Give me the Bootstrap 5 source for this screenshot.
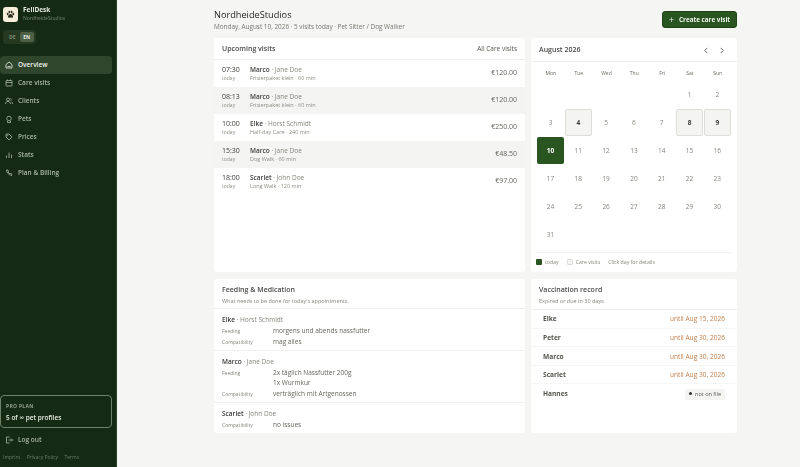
<!DOCTYPE html>
<html lang="en">
<head>
    <meta charset="UTF-8">
    <meta name="viewport" content="width=device-width, initial-scale=1.0">
    <title>FellDesk</title>
    <link rel="stylesheet" href="https://cdn.jsdelivr.net/npm/bootstrap@5.3.0/dist/css/bootstrap.min.css">
    <style>
        html, body { height: 467px; overflow: hidden; }
        body { font-family: "Open Sans", "Liberation Sans", sans-serif; background: #f5f5f3; color: #2b2b2b; font-size: 7px; }
        .shell { height: 467px; }
        .side { width: 117px; flex: none; background: #142a12; border-right: 1px solid #2a3f28; color: #c9d3c5; padding: 6px 4px 0 0; }
        .side > * { transform: translateZ(0); }
        .brand { padding: 0 0 0 3px; height: 16px; gap: 5px; }
        .paw { width: 15px; height: 15px; background: #f6eeda; border-radius: 3px; }
        .brand-name { font-size: 6.5px; font-weight: 700; color: #e6ebe2; line-height: 8px; }
        .brand-sub { font-size: 5px; color: #75856f; line-height: 8px; }
        .lang { margin: 8px 0 0 3px; width: 33px; height: 14px; background: #24391f; border-radius: 3px; padding: 2px; }
        .lang span { flex: 1; text-align: center; font-size: 5px; font-weight: 700; line-height: 10px; color: #7d8c77; border-radius: 2px; }
        .lang .on { background: #4d6147; color: #e6ebe2; }
        .menu { margin-top: 12px; }
        .menu a { height: 18px; display: flex; align-items: center; gap: 5px; padding-left: 5px; color: #a9b7a4; font-size: 6.5px; font-weight: 600; text-decoration: none; border-radius: 4px; }
        .menu a.on { background: #2f452c; color: #eef2ea; }
        .menu svg, .logout svg { width: 8px; height: 8px; flex: none; fill: none; stroke: currentColor; stroke-width: 1.6; }
        .plan { margin-top: auto; border: 1px solid #6d8169; border-radius: 4px; height: 33px; padding: 6px 5px; }
        .plan-top { font-size: 5px; font-weight: 700; letter-spacing: .3px; color: #93a28d; line-height: 8px; }
        .plan-txt { font-size: 6.5px; font-weight: 600; color: #e6ebe2; line-height: 10px; margin-top: 3px; }
        .logout { margin-top: 6px; height: 12px; padding-left: 5px; gap: 5px; color: #a9b7a4; font-size: 6.5px; font-weight: 600; }
        .legal { margin-top: 6px; height: 12px; margin-bottom: 3px; padding-left: 3px; gap: 6.5px; color: #6c7c66; font-size: 5px; }
        .main-col { width: 523px; margin-left: 97px; padding-top: 9px; transform: translateZ(0); }
        .page-top { height: 29px; }
        .page-title { font-size: 9.2px; font-weight: 500; line-height: 12px; margin: 0; color: #262626; }
        .page-sub { font-size: 6.4px; color: #77776f; line-height: 10px; margin-top: 1px; }
        .add-btn { background: #295521; color: #f2f5ee; border: 1px solid #1e4418; border-radius: 3px; font-size: 6.3px; font-weight: 700; height: 17px; width: 75px; padding: 0; margin-top: 2px; line-height: 14px; }
        .add-btn span { font-weight: 400; font-size: 9px; margin-right: 5px; vertical-align: -1px; }
        .board { display: grid; grid-template-columns: 311px 206px; grid-template-rows: 234px 154px; gap: 7px 6px; }
        .box { background: #fff; border-radius: 3px; border: 0; overflow: hidden; }
        .box-head { padding: 1.5px 8px 0; height: 24px; border-bottom: 1px solid #eeeeeb; font-size: 7px; font-weight: 600; color: #4a4a48; }
        .box-head.short { height: 22px; }
        .box-head-link { font-size: 6.5px; font-weight: 400; color: #55554f; }
        .box-head2 { height: 30px; border-bottom: 1px solid #eeeeeb; padding: 6px 8px 0; }
        .box-head2.tall { height: 31px; }
        .box-title { font-size: 7px; font-weight: 600; color: #4a4a48; line-height: 10px; }
        .box-note { font-size: 5.5px; color: #85857e; line-height: 8px; margin-top: 2px; }
        .visit { height: 27px; padding: 0 8px; }
        .visit.alt { background: #f4f4f2; }
        .v-time { width: 28px; flex: none; }
        .v-hour { font-size: 7px; color: #3a3a38; line-height: 9px; }
        .v-day { font-size: 5px; color: #8d8d86; line-height: 8px; }
        .v-name { font-size: 6.5px; line-height: 9px; color: #85857e; }
        .v-name b, .feed-name b { color: #3a3a38; font-weight: 600; }
        .v-kind { font-size: 5.5px; line-height: 8px; color: #8d8d86; }
        .v-price { margin-left: auto; font-size: 7px; color: #66665f; }
        .cal-grid { display: grid; grid-template-columns: repeat(7, 27.8px); padding: 4px 6px 0; }
        .cal-dow { height: 15px; display: flex; align-items: center; justify-content: center; font-size: 5px; color: #66665f; }
        .cal-day { height: 27px; margin-bottom: 1px; width: 27px; display: flex; align-items: center; justify-content: center; font-size: 6.5px; color: #85857e; border-radius: 2px; }
        .cal-day.has { background: #f4f4f2; border: 1px solid #deded9; color: #3a3a38; font-weight: 700; }
        .cal-day.now { background: #295521; color: #fff; font-weight: 700; }
        .chev { gap: 10px; margin-right: 4px; color: #55554f; }
        .chev svg { width: 6px; height: 7px; fill: none; stroke: currentColor; stroke-width: 1; }
        .cal-foot { margin: 3px 5px 0; border-top: 1px solid #f1f1ee; padding-top: 6px; gap: 8px; font-size: 5.2px; color: #85857e; }
        .swatch { width: 6px; height: 6px; display: inline-block; border-radius: 1px; margin-right: 3px; vertical-align: -1px; }
        .swatch.dark { background: #295521; }
        .swatch.pale { background: #f4f4f2; border: 1px solid #deded9; }
        .feed { padding: 5.5px 8px 1.500px; border-bottom: 1px solid #f1f1ee; }
        .feed:last-child { border-bottom: 0; }
        .feed-name { font-size: 6.5px; line-height: 9px; color: #85857e; margin-bottom: 2px; }
        .feed-row { display: flex; font-size: 6.5px; color: #66665f; line-height: 10px; margin-bottom: 1.5px; }
        .feed-label { width: 51px; flex: none; font-size: 5px; color: #85857e; }
        .vac { height: 18.6px; padding: 1px 12px 0; border-bottom: 1px solid #f6f6f4; }
        .vac:last-child { border-bottom: 0; }
        .vac-name { font-size: 6.6px; font-weight: 700; color: #55554f; }
        .vac-date { margin-left: auto; font-size: 6.6px; color: #c17f4e; }
        .vac-tag { margin-left: auto; background: #f4f4f2; border-radius: 2px; padding: 1px 4px; font-size: 5.5px; line-height: 9px; color: #55554f; }
        .vac-tag i { display: inline-block; width: 3px; height: 3px; background: #333; border-radius: 50%; margin-right: 3px; vertical-align: 1px; }
    </style>
</head>
<body>
<div class="shell d-flex">
    <!-- sidebar -->
    <aside class="side d-flex flex-column">
        <div class="brand d-flex align-items-center">
            <div class="paw d-flex align-items-center justify-content-center">
                <svg width="9" height="9" viewBox="0 0 16 16" fill="#2a2a1c"><ellipse cx="3" cy="7" rx="1.6" ry="2.2"/><ellipse cx="6" cy="3.5" rx="1.6" ry="2.3"/><ellipse cx="10" cy="3.5" rx="1.6" ry="2.3"/><ellipse cx="13" cy="7" rx="1.6" ry="2.2"/><path d="M8 7c-2.5 0-4.5 3-4.5 5 0 1.6 1.5 2 2.5 1.7.8-.3 1.3-.4 2-.4s1.200.1 2 .4c1 .3 2.500-.1 2.500-1.700 0-2-2-5-4.500-5z"/></svg>
            </div>
            <div>
                <div class="brand-name">FellDesk</div>
                <div class="brand-sub">NordheideStudios</div>
            </div>
        </div>
        <div class="lang d-flex"><span>DE</span><span class="on">EN</span></div>
        <nav class="menu">
            <a href="#" class="on"><svg viewBox="0 0 16 16"><path d="M2 7l6-5 6 5v7H2z"/><path d="M5 11h6"/></svg>Overview</a>
            <a href="#"><svg viewBox="0 0 16 16"><rect x="2" y="3" width="12" height="11" rx="1"/><path d="M2 7h12M5 1v3M11 1v3"/></svg>Care visits</a>
            <a href="#"><svg viewBox="0 0 16 16"><circle cx="6" cy="5" r="3"/><path d="M1 14c0-3 2-5 5-5s5 2 5 5M11 2.500a3 3 0 0 1 0 5M13 9.500c1.500.7 2 2.500 2 4.500"/></svg>Clients</a>
            <a href="#"><svg viewBox="0 0 16 16"><circle cx="8" cy="7" r="4.500"/><path d="M5 12v3h6v-3"/></svg>Pets</a>
            <a href="#"><svg viewBox="0 0 16 16"><path d="M2 2h6l6 6-6 6-6-6z"/><circle cx="5" cy="5" r=".6"/></svg>Prices</a>
            <a href="#"><svg viewBox="0 0 16 16"><path d="M3 14V9M8 14V3M13 14V7"/></svg>Stats</a>
            <a href="#"><svg viewBox="0 0 16 16"><path d="M3 2c0 5 5 10 10 11l1-3-3-1-1 1c-2-1-3-3-4-4l1-1-1-3z"/></svg>Plan &amp; Billing</a>
        </nav>
        <div class="plan">
            <div class="plan-top">PRO PLAN</div>
            <div class="plan-txt">5 of ∞ pet profiles</div>
        </div>
        <div class="logout d-flex align-items-center">
            <svg viewBox="0 0 16 16"><path d="M9 2H3v12h6M7 8h8M12 5l3 3-3 3"/></svg>Log out
        </div>
        <div class="legal d-flex align-items-center"><span>Imprint</span><span>Privacy Policy</span><span>Terms</span></div>
    </aside>

    <!-- main -->
    <main class="main-col">
        <div class="page-top d-flex justify-content-between">
            <div>
                <h1 class="page-title">NordheideStudios</h1>
                <div class="page-sub">Monday, August 10, 2026 · 5 visits today · Pet Sitter / Dog Walker</div>
            </div>
            <button class="btn add-btn" type="button"><span>+</span>Create care visit</button>
        </div>

        <div class="board">
            <section class="box">
                <div class="box-head short d-flex align-items-center justify-content-between">Upcoming visits <span class="box-head-link">All Care visits</span></div>
                <div id="visits"></div>
            </section>

            <section class="box">
                <div class="box-head d-flex align-items-center justify-content-between">August 2026
                    <div class="chev d-flex">
                        <svg viewBox="0 0 6 8"><path d="M4.500 1L1.500 4l3 3"/></svg>
                        <svg viewBox="0 0 6 8"><path d="M1.500 1l3 3-3 3"/></svg>
                    </div>
                </div>
                <div class="cal-grid" id="cal"></div>
                <div class="cal-foot d-flex">
                    <span><i class="swatch dark"></i>today</span>
                    <span><i class="swatch pale"></i>Care visits</span>
                    <span>Click day for details</span>
                </div>
            </section>

            <section class="box">
                <div class="box-head2">
                    <div class="box-title">Feeding &amp; Medication</div>
                    <div class="box-note">What needs to be done for today's appointments.</div>
                </div>
                <div class="feed">
                    <div class="feed-name"><b>Elke</b> · Horst Schmidt</div>
                    <div class="feed-row"><span class="feed-label">Feeding</span><span>morgens und abends nassfutter</span></div>
                    <div class="feed-row"><span class="feed-label">Compatibility</span><span>mag alles</span></div>
                </div>
                <div class="feed">
                    <div class="feed-name"><b>Marco</b> · Jane Doe</div>
                    <div class="feed-row"><span class="feed-label">Feeding</span><span>2x täglich Nassfutter 200g<br>1x Wurmkur</span></div>
                    <div class="feed-row"><span class="feed-label">Compatibility</span><span>verträglich mit Artgenossen</span></div>
                </div>
                <div class="feed">
                    <div class="feed-name"><b>Scarlet</b> · John Doe</div>
                    <div class="feed-row"><span class="feed-label">Compatibility</span><span>no issues</span></div>
                </div>
            </section>

            <section class="box">
                <div class="box-head2 tall">
                    <div class="box-title">Vaccination record</div>
                    <div class="box-note">Expired or due in 30 days</div>
                </div>
                <div class="vac d-flex align-items-center"><span class="vac-name">Elke</span><span class="vac-date">until Aug 15, 2026</span></div>
                <div class="vac d-flex align-items-center"><span class="vac-name">Peter</span><span class="vac-date">until Aug 30, 2026</span></div>
                <div class="vac d-flex align-items-center"><span class="vac-name">Marco</span><span class="vac-date">until Aug 30, 2026</span></div>
                <div class="vac d-flex align-items-center"><span class="vac-name">Scarlet</span><span class="vac-date">until Aug 30, 2026</span></div>
                <div class="vac d-flex align-items-center"><span class="vac-name">Hannes</span><span class="vac-tag"><i></i>not on file</span></div>
            </section>
        </div>
    </main>
</div>

<script>
    // visit rows
    const visits = [
        ["07:30", "Marco", "Jane Doe", "Frisierpaket klein · 60 min", "€120.00", 0],
        ["08:13", "Marco", "Jane Doe", "Frisierpaket klein · 60 min", "€120.00", 1],
        ["10:00", "Elke", "Horst Schmidt", "Half-day Care · 240 min", "€250.00", 0],
        ["15:30", "Marco", "Jane Doe", "Dog Walk · 60 min", "€48.50", 1],
        ["18:00", "Scarlet", "John Doe", "Long Walk · 120 min", "€97.00", 0]
    ];
    document.getElementById("visits").innerHTML = visits.map(v => `
        <div class="visit d-flex align-items-center ${v[5] ? "alt" : ""}">
            <div class="v-time"><div class="v-hour">${v[0]}</div><div class="v-day">today</div></div>
            <div><div class="v-name"><b>${v[1]}</b> · ${v[2]}</div><div class="v-kind">${v[3]}</div></div>
            <div class="v-price">${v[4]}</div>
        </div>`).join("");

    // calendar, August 2026 starts on a Saturday
    let cal = ["Mon", "Tue", "Wed", "Thu", "Fri", "Sat", "Sun"].map(d => `<div class="cal-dow">${d}</div>`).join("");
    for (let i = 0; i < 5; i++) cal += `<div class="cal-day"></div>`;
    for (let d = 1; d <= 31; d++) {
        let cls = d === 10 ? "now" : [4, 8, 9].includes(d) ? "has" : "";
        cal += `<div class="cal-day ${cls}">${d}</div>`;
    }
    document.getElementById("cal").innerHTML = cal;
</script>
<script src="https://cdn.jsdelivr.net/npm/bootstrap@5.3.0/dist/js/bootstrap.bundle.min.js"></script>
</body>
</html>
